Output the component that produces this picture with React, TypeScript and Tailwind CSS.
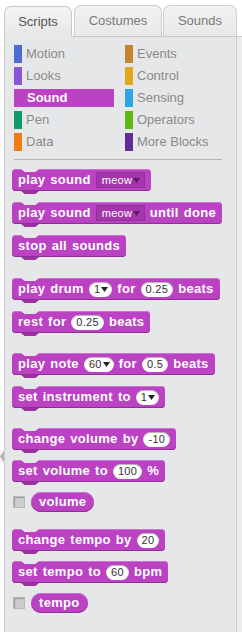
import React from "react";

const PANEL = "bg-[#e6e7e8]";

type Cat = { name: string; color: string; active?: boolean };

const leftCats: Cat[] = [
  { name: "Motion", color: "bg-[#4a6cd4]" },
  { name: "Looks", color: "bg-[#8a55d7]" },
  { name: "Sound", color: "bg-[#bb42c3]", active: true },
  { name: "Pen", color: "bg-[#0e9a6c]" },
  { name: "Data", color: "bg-[#ee7d16]" },
];

const rightCats: Cat[] = [
  { name: "Events", color: "bg-[#c88330]" },
  { name: "Control", color: "bg-[#e1a91a]" },
  { name: "Sensing", color: "bg-[#2ca5e2]" },
  { name: "Operators", color: "bg-[#5cb712]" },
  { name: "More Blocks", color: "bg-[#632d99]" },
];

const CategoryRow = ({ cat }: { cat: Cat }) =>
  cat.active ? (
    <div className="flex h-[18px] items-center bg-[#bb42c3] pl-[13px] text-[13px] font-bold text-white">
      {cat.name}
    </div>
  ) : (
    <div className="flex h-[18px] items-center gap-[4px] text-[13px] text-[#8a8a8a]">
      <span className={`h-[18px] w-[8px] ${cat.color}`} />
      <span>{cat.name}</span>
    </div>
  );

const Arrow = ({ color }: { color: string }) => (
  <svg width="7" height="5" viewBox="0 0 7 5" className="shrink-0">
    <path d="M0 0 H7 L3.5 5 Z" fill={color} />
  </svg>
);

// white round number slot
const Num = ({ v }: { v: string }) => (
  <span className="flex h-[15px] items-center rounded-full bg-white px-[5px] text-[11px] font-normal text-[#333] shadow-[inset_0_1px_1px_rgba(0,0,0,0.3)]">
    {v}
  </span>
);

// white round slot with dropdown arrow
const NumMenu = ({ v }: { v: string }) => (
  <span className="flex h-[15px] items-center gap-[1px] rounded-full bg-white pl-[5px] pr-[4px] text-[11px] font-normal text-[#333] shadow-[inset_0_1px_1px_rgba(0,0,0,0.3)]">
    {v}
    <Arrow color="#222" />
  </span>
);

// darker purple sound menu
const Menu = ({ v }: { v: string }) => (
  <span className="flex h-[16px] w-[49px] items-center justify-between border border-[#93309a] bg-[#a236aa] pl-[5px] pr-[4px] text-[11px] font-normal text-white">
    {v}
    <Arrow color="#5b1a61" />
  </span>
);

const W = ({ t }: { t: string }) => (
  <>
    {t.split(" ").map((w, i) => (
      <span key={i}>{w}</span>
    ))}
  </>
);

const Block = ({ mt, children }: { mt: string; children: React.ReactNode }) => (
  <div
    className={`relative flex h-[22px] w-fit items-center gap-[5px] rounded-[4px] bg-[#bb42c3] px-[6px] text-[13px] font-bold tracking-[0.3px] text-white shadow-[inset_0_-1px_0_#8e2f94,inset_0_1px_0_#cf70d5] ${mt}`}
  >
    <span
      className={`absolute left-[9px] top-0 h-[3px] w-[18px] ${PANEL} [clip-path:polygon(0_0,100%_0,80%_100%,20%_100%)]`}
    />
    <span className="absolute -bottom-[3px] left-[9px] h-[3px] w-[18px] bg-[#9a339f] [clip-path:polygon(0_0,100%_0,80%_100%,20%_100%)]" />
    {children}
  </div>
);

const Reporter = ({ mt, label }: { mt: string; label: string }) => (
  <div className={`flex h-[20px] items-center gap-[6px] ${mt}`}>
    <span className="ml-[1px] h-[12px] w-[12px] border border-[#b8b8b8] bg-[#cdcdcd] shadow-[inset_1px_1px_1px_#9a9a9a]" />
    <span className="flex h-[20px] items-center rounded-full bg-[#bb42c3] px-[8px] text-[13px] font-bold tracking-[0.3px] text-white shadow-[inset_0_-1px_0_#8e2f94,inset_0_1px_0_#cf70d5]">
      {label}
    </span>
  </div>
);

export default function App() {
  return (
    <div className="flex h-[632px] w-[242px] overflow-hidden bg-white font-['Liberation_Sans',Arial,sans-serif]">
      {/* collapse handle gutter */}
      <div className="w-[4px] shrink-0">
        <div className="mt-[450px] h-[13px] w-[4px] bg-[#f3f3f3]">
          <svg width="4" height="13" viewBox="0 0 4 13">
            <path d="M4 1 V12 L0 6.5 Z" fill="#b4b4b4" />
          </svg>
        </div>
      </div>

      <div className="flex min-w-0 flex-1 flex-col">
        {/* tabs */}
        <div className="flex h-[36px] items-end pt-[5px]">
          <div className="relative z-10 -mb-px flex h-[31px] w-[68px] items-center justify-center rounded-t-[7px] border border-b-0 border-[#c9c9c9] bg-gradient-to-b from-[#f4f4f4] to-[#e6e7e8] text-[13px] text-[#555]">
            Scripts
          </div>
          <div className="w-[2px] self-stretch" />
          <div className="flex h-[31px] w-[88px] items-center justify-center rounded-t-[7px] border border-b-0 border-[#cdcdcd] bg-gradient-to-b from-[#f2f2f2] to-[#e8e8e8] text-[13px] text-[#7a7a7a]">
            Costumes
          </div>
          <div className="w-[1px] self-stretch" />
          <div className="flex h-[31px] w-[74px] items-center justify-center rounded-t-[7px] border border-b-0 border-[#cdcdcd] bg-gradient-to-b from-[#f2f2f2] to-[#e8e8e8] text-[13px] text-[#7a7a7a]">
            Sounds
          </div>
        </div>

        {/* palette */}
        <div className="flex flex-1 border-t border-[#c9c9c9]">
          <div className={`flex w-[232px] flex-col border-l border-[#c9c9c9] ${PANEL}`}>
            <div className="grid grid-cols-[100px_100px] gap-x-[11px] pl-[9px] pt-[8px]">
              <div className="flex flex-col gap-[4px]">
                {leftCats.map((c) => (
                  <CategoryRow key={c.name} cat={c} />
                ))}
              </div>
              <div className="flex flex-col gap-[4px]">
                {rightCats.map((c) => (
                  <CategoryRow key={c.name} cat={c} />
                ))}
              </div>
            </div>
            <div className="ml-[9px] mt-[8px] h-px w-[208px] bg-[#b5b5b5]" />

            <div className="flex flex-col items-start pl-[7px]">
              <Block mt="mt-[9px]">
                <W t="play sound" />
                <Menu v="meow" />
              </Block>
              <Block mt="mt-[11px]">
                <W t="play sound" />
                <Menu v="meow" />
                <W t="until done" />
              </Block>
              <Block mt="mt-[11px]">
                <W t="stop all sounds" />
              </Block>

              <Block mt="mt-[21px]">
                <W t="play drum" />
                <NumMenu v="1" />
                <span>for</span>
                <Num v="0.25" />
                <span>beats</span>
              </Block>
              <Block mt="mt-[11px]">
                <W t="rest for" />
                <Num v="0.25" />
                <span>beats</span>
              </Block>

              <Block mt="mt-[20px]">
                <W t="play note" />
                <NumMenu v="60" />
                <span>for</span>
                <Num v="0.5" />
                <span>beats</span>
              </Block>
              <Block mt="mt-[11px]">
                <W t="set instrument to" />
                <NumMenu v="1" />
              </Block>

              <Block mt="mt-[20px]">
                <W t="change volume by" />
                <Num v="-10" />
              </Block>
              <Block mt="mt-[10px]">
                <W t="set volume to" />
                <Num v="100" />
                <span>%</span>
              </Block>
              <Reporter mt="mt-[10px]" label="volume" />

              <Block mt="mt-[17px]">
                <W t="change tempo by" />
                <Num v="20" />
              </Block>
              <Block mt="mt-[10px]">
                <W t="set tempo to" />
                <Num v="60" />
                <span>bpm</span>
              </Block>
              <Reporter mt="mt-[10px]" label="tempo" />
            </div>
          </div>
          {/* scrollbar strip */}
          <div className="flex-1 border-l border-[#cfcfcf] bg-[#ededed]" />
        </div>
      </div>
    </div>
  );
}
